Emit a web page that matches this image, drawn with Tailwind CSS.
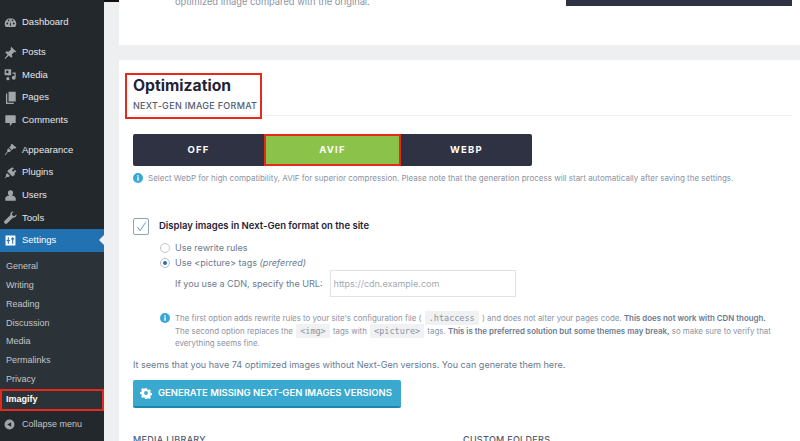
<!DOCTYPE html>
<html lang="en">
<head>
<meta charset="UTF-8" />
<title>Imagify settings</title>
<script src="https://cdn.jsdelivr.net/npm/@tailwindcss/browser@4"></script>
</head>
<body class="w-[800px] h-[441px] overflow-hidden bg-[#eeeff1] flex font-['Inter',sans-serif]">

    <!-- Sidebar -->
    <aside class="w-[104px] h-[441px] shrink-0 overflow-hidden bg-[#23282d] text-[#e4e6e8] text-[9.5px] font-['Liberation_Sans',sans-serif] flex flex-col">
        <a class="h-[22.700px] shrink-0 mt-[11px] flex items-center gap-[5px] pl-[4px]">
            <svg class="w-[13px] h-[13px] text-[#a0a5aa]" viewBox="0 0 20 20" fill="currentColor"><path d="M10 3a9 9 0 0 0-9 9c0 2 .7 3.700 1.800 5h14.400a8.900 8.900 0 0 0 1.800-5 9 9 0 0 0-9-9zm-5 10a1.500 1.500 0 1 1 0-3 1.500 1.500 0 0 1 0 3zm2-5a1.300 1.300 0 1 1 0-2.600A1.300 1.300 0 0 1 7 8zm4 7H9l1-7 1 7zm2-7a1.300 1.300 0 1 1 0-2.600A1.300 1.300 0 0 1 13 8zm2 5a1.500 1.500 0 1 1 0-3 1.500 1.500 0 0 1 0 3z"/></svg>
            <span>Dashboard</span>
        </a>
        <a class="h-[22.700px] shrink-0 mt-[7px] flex items-center gap-[5px] pl-[4px]">
            <svg class="w-[13px] h-[13px] text-[#a0a5aa]" viewBox="0 0 20 20" fill="currentColor"><path d="M11 1l8 8-2 1-1-1-4 4 1 3-2 2-3.500-3.500L2 20l-1-1 4.500-5.500L2 10l2-2 3 1 4-4-1-1z"/></svg>
            <span>Posts</span>
        </a>
        <a class="h-[22.700px] shrink-0 flex items-center gap-[5px] pl-[4px]">
            <svg class="w-[13px] h-[13px] text-[#a0a5aa]" viewBox="0 0 20 20" fill="currentColor"><path d="M1 2h10v9H8l-1 1-1-1H1zm4 2a2 2 0 1 0 0 4 2 2 0 0 0 0-4zm8 3h5v8a3 3 0 1 1-2-2.800V9h-3zM6 14a2.500 2.500 0 1 1 0 5 2.500 2.500 0 0 1 0-5z"/></svg>
            <span>Media</span>
        </a>
        <a class="h-[22.700px] shrink-0 flex items-center gap-[5px] pl-[4px]">
            <svg class="w-[13px] h-[13px] text-[#a0a5aa]" viewBox="0 0 20 20" fill="currentColor"><path d="M7 1h11v15H7zM3 4h2v14h10v2H3z"/></svg>
            <span>Pages</span>
        </a>
        <a class="h-[22.700px] shrink-0 flex items-center gap-[5px] pl-[4px]">
            <svg class="w-[13px] h-[13px] text-[#a0a5aa]" viewBox="0 0 20 20" fill="currentColor"><path d="M3 2h14a1 1 0 0 1 1 1v10a1 1 0 0 1-1 1h-4l-4 5v-5H3a1 1 0 0 1-1-1V3a1 1 0 0 1 1-1z"/></svg>
            <span>Comments</span>
        </a>
        <a class="h-[22.700px] shrink-0 mt-[7px] flex items-center gap-[5px] pl-[4px]">
            <svg class="w-[13px] h-[13px] text-[#a0a5aa]" viewBox="0 0 20 20" fill="currentColor"><path d="M12 1l7 6-2 2-2-1-3 3-4-4 3-3-1-1zM7 8l4 4-2 2-3 0-4 5-1-1 4-5 0-3z"/></svg>
            <span>Appearance</span>
        </a>
        <a class="h-[22.700px] shrink-0 flex items-center gap-[5px] pl-[4px]">
            <svg class="w-[13px] h-[13px] text-[#a0a5aa]" viewBox="0 0 20 20" fill="currentColor"><path d="M13 2l2 2-3 3 2 2 3-3 2 2-3 3 1 2-4 3-8-8 3-3zM5 11l4 4-2 2H4l-2 2-1-1 2-2v-3z"/></svg>
            <span>Plugins</span>
        </a>
        <a class="h-[22.700px] shrink-0 flex items-center gap-[5px] pl-[4px]">
            <svg class="w-[13px] h-[13px] text-[#a0a5aa]" viewBox="0 0 20 20" fill="currentColor"><path d="M10 2a4 4 0 0 1 4 4c0 2-1 3-2 4 3 .5 6 2 6 4v4H2v-4c0-2 3-3.500 6-4-1-1-2-2-2-4a4 4 0 0 1 4-4z"/></svg>
            <span>Users</span>
        </a>
        <a class="h-[22.700px] shrink-0 flex items-center gap-[5px] pl-[4px]">
            <svg class="w-[13px] h-[13px] text-[#a0a5aa]" viewBox="0 0 20 20" fill="currentColor"><path d="M15 1a4 4 0 0 0-5 5L1 15a2.800 2.800 0 0 0 4 4l9-9a4 4 0 0 0 5-5l-3 3-3-1-1-3z"/></svg>
            <span>Tools</span>
        </a>
        <a class="relative h-[22.700px] shrink-0 flex items-center pl-[5px] bg-[#2271b1] text-white">
            <svg class="w-[11px] h-[11px] text-white" viewBox="0 0 20 20" fill="currentColor"><path fill-rule="evenodd" d="M1 1h18v18H1zm4 3v5H3v2h2v5h2v-5h2V9H7V4zm8 0v2h-2v2h2v8h2V8h2V6h-2V4z"/></svg>
            <span class="ml-[6px]">Settings</span>
            <span class="absolute right-0 top-[6px] border-y-[5px] border-y-transparent border-r-[5px] border-r-[#f0f0f1]"></span>
        </a>
        <nav class="h-[159px] shrink-0 pt-[6px] bg-[#2c3338] text-[#c3c4c7] text-[9px] flex flex-col">
            <a class="h-[18.700px] shrink-0 flex items-center pl-[6px]">General</a>
            <a class="h-[18.700px] shrink-0 flex items-center pl-[6px]">Writing</a>
            <a class="h-[18.700px] shrink-0 flex items-center pl-[6px]">Reading</a>
            <a class="h-[18.700px] shrink-0 flex items-center pl-[6px]">Discussion</a>
            <a class="h-[18.700px] shrink-0 flex items-center pl-[6px]">Media</a>
            <a class="h-[18.700px] shrink-0 flex items-center pl-[6px]">Permalinks</a>
            <a class="h-[18.700px] shrink-0 flex items-center pl-[6px]">Privacy</a>
            <a class="h-[22px] shrink-0 flex items-center pl-[4px] border-2 border-[#e7291c] text-white font-bold">Imagify</a>
        </nav>
        <a class="h-[23px] shrink-0 mt-[2px] flex items-center gap-[7px] pl-[4px] text-[#c3c4c7] text-[9px]">
            <svg class="w-[11px] h-[11px] text-[#a0a5aa]" viewBox="0 0 20 20" fill="currentColor"><path fill-rule="evenodd" d="M10 1a9 9 0 1 1 0 18 9 9 0 0 1 0-18zm3 5l-7 4 7 4z"/></svg>
            <span>Collapse menu</span>
        </a>
    </aside>

    <main class="relative flex-1 min-w-0 pl-[15px]">
        <div class="absolute left-0 right-0 top-0 h-[2px] bg-[#111]"></div>

        <!-- Previous card, scrolled away -->
        <section class="relative h-[45px] bg-white overflow-hidden pl-[56px]">
            <p class="-mt-[4px] text-[9.300px] leading-[12px] text-[#8b93a3]">optimized image compared with the original.</p>
            <div class="absolute left-[447px] top-0 w-[226px] h-[6px] bg-[#2e3243]"></div>
        </section>

        <!-- Optimization card -->
        <section class="mt-[15px] h-[381px] bg-white pl-[14px] pr-[8px] overflow-hidden">
            <div class="relative h-[56px] pt-[15px] border-b border-[#f0f1f3]">
                <h2 class="text-[15.700px] leading-[22px] font-bold text-[#1f2338]">Optimization</h2>
                <h3 class="mt-[2px] text-[9px] leading-[13px] font-medium tracking-[0.3px] text-[#525c70]">NEXT-GEN IMAGE FORMAT</h3>
                <div class="absolute -left-[8px] top-[13px] w-[137px] h-[46px] border-2 border-[#e7291c]"></div>
            </div>

            <div class="mt-[18px] w-[399px] h-[32px] flex text-[9.500px] font-bold tracking-[1.200px] text-white">
                <div class="w-[131px] flex items-center justify-center bg-[#2e3243] rounded-l-[2px]">OFF</div>
                <div class="w-[137px] flex items-center justify-center bg-[#8bc34a] border-2 border-[#e7291c]">AVIF</div>
                <div class="flex-1 flex items-center justify-center bg-[#2e3243] rounded-r-[2px]">WEBP</div>
            </div>

            <p class="mt-[6px] flex items-center gap-[5px] text-[8px] leading-[12px] text-[#8b93a3]">
                <svg class="w-[10px] h-[10px] shrink-0" viewBox="0 0 10 10"><circle cx="5" cy="5" r="5" fill="#38a9d6"/><rect x="4.300" y="4.200" width="1.400" height="3.600" fill="#fff"/><rect x="4.300" y="2.200" width="1.400" height="1.400" fill="#fff"/></svg>
                Select WebP for high compatibility, AVIF for superior compression. Please note that the generation process will start automatically after saving the settings.
            </p>

            <div class="mt-[34px] flex items-center gap-[10px]">
                <span class="w-[16px] h-[17px] flex items-center justify-center border border-[#8ca3bd] rounded-[2px]">
                    <svg class="w-[11px] h-[11px] text-[#5f8fc0]" viewBox="0 0 12 12" fill="none" stroke="currentColor" stroke-width="1"><path d="M1.500 6.500L4.500 10.500L10.500 1.500"/></svg>
                </span>
                <span class="text-[9.500px] font-semibold text-[#1f2338]">Display images in Next-Gen format on the site</span>
            </div>

            <div class="ml-[27px] mt-[6px] text-[9.050px] text-[#6b7a90]">
                <label class="h-[14px] flex items-center gap-[5px]">
                    <span class="w-[10px] h-[10px] rounded-full border border-[#c3c7cd]"></span>
                    Use rewrite rules
                </label>
                <label class="h-[15px] flex items-center gap-[5px]">
                    <span class="w-[10px] h-[10px] flex items-center justify-center rounded-full border border-[#b6bcc4]">
                        <span class="w-[4px] h-[4px] rounded-full bg-[#2271b1]"></span>
                    </span>
                    <span>Use &lt;picture&gt; tags <em>(preferred)</em></span>
                </label>
                <div class="ml-[15px] flex items-center gap-[7px]">
                    <span>If you use a CDN, specify the URL:</span>
                    <input class="w-[186px] h-[27px] px-[3px] border border-[#dfe2e6] bg-white text-[9px] placeholder:text-[#a3a9b3]" placeholder="https://cdn.example.com" />
                </div>
            </div>

            <div class="ml-[27px] mt-[15px] flex gap-[5px] text-[7.900px] leading-[12.600px] text-[#8b93a3]">
                <svg class="w-[10px] h-[10px] mt-[1px] shrink-0" viewBox="0 0 10 10"><circle cx="5" cy="5" r="5" fill="#38a9d6"/><rect x="4.300" y="4.200" width="1.400" height="3.600" fill="#fff"/><rect x="4.300" y="2.200" width="1.400" height="1.400" fill="#fff"/></svg>
                <p class="whitespace-nowrap">
                    The first option adds rewrite rules to your site's configuration file ( <code class="mx-[1px] px-[4px] py-[2px] bg-[#f0f1f3] rounded-[1px] text-[8.500px] font-['DejaVu_Sans_Mono',monospace]">.htaccess</code> ) and does not alter your pages code. <b class="font-semibold text-[#6b7a90]">This does not work with CDN though.</b><br />
                    The second option replaces the <code class="mx-[1px] px-[4px] py-[2px] bg-[#f0f1f3] rounded-[1px] text-[8.500px] font-['DejaVu_Sans_Mono',monospace]">&lt;img&gt;</code> tags with <code class="mx-[1px] px-[4px] py-[2px] bg-[#f0f1f3] rounded-[1px] text-[8.500px] font-['DejaVu_Sans_Mono',monospace]">&lt;picture&gt;</code> tags. <b class="font-semibold text-[#6b7a90]">This is the preferred solution but some themes may break,</b> so make sure to verify that<br />
                    everything seems fine.
                </p>
            </div>

            <p class="mt-[8px] text-[9.050px] leading-[14px] text-[#6b7a90]">It seems that you have 74 optimized images without Next-Gen versions. You can generate them here.</p>

            <button class="mt-[8px] w-[268px] h-[28px] flex items-center gap-[6px] pl-[7px] bg-[#3aa9cf] border-b-2 border-[#1f86ab] rounded-[2px] text-[9.450px] font-semibold text-white whitespace-nowrap">
                <svg class="w-[12px] h-[12px]" viewBox="0 0 20 20" fill="currentColor"><path fill-rule="evenodd" d="M8 1h4l.5 2.600 1.500.7 2.300-1.400 2.800 2.800-1.400 2.300.7 1.500 2.600.5v4l-2.600.5-.7 1.500 1.400 2.300-2.800 2.800-2.300-1.400-1.500.7L12 21H8l-.5-2.600-1.500-.7-2.300 1.400L.9 16.300l1.400-2.300-.7-1.500L-1 12V8l2.600-.5.7-1.500L.9 3.700 3.700.9 6 2.300l1.500-.7zM10 6.500a3.500 3.500 0 1 0 0 7 3.500 3.500 0 0 0 0-7z" transform="translate(1 1) scale(.9)"/></svg>
                GENERATE MISSING NEXT-GEN IMAGES VERSIONS
            </button>

            <div class="mt-[26px] flex text-[9px] leading-[12px] font-medium tracking-[0.3px] text-[#525c70]">
                <span class="w-[330px]">MEDIA LIBRARY</span>
                <span>CUSTOM FOLDERS</span>
            </div>
        </section>
    </main>
</body>
</html>
